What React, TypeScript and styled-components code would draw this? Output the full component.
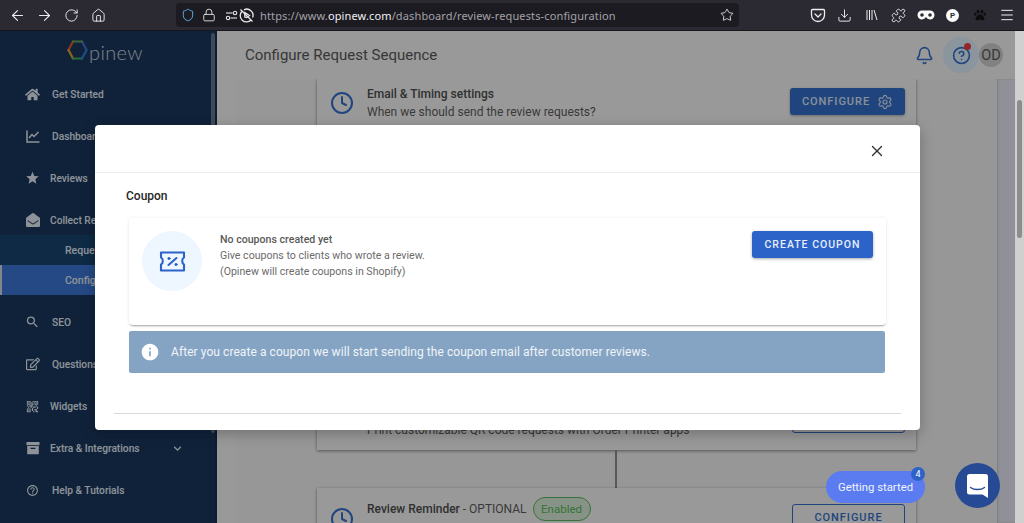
import React from "react";
import styled, { createGlobalStyle } from "styled-components";
import { ArrowLeft, ArrowRight, RotateCw, House, Shield, Lock, Star, Download, Puzzle, Menu, Bell, CircleHelp, Settings, Clock, X } from "lucide-react";
import { FaHome, FaRegEdit, FaPaw, FaEnvelopeOpen } from "react-icons/fa";
import { MdStar, MdSearch, MdOutlineQrCode2, MdHelpOutline, MdExpandMore, MdInfo } from "react-icons/md";

const Global = createGlobalStyle`
  html, body { margin: 0; padding: 0; height: 100%; overflow: hidden; }
  body { font-family: Roboto, "Liberation Sans", sans-serif; }
  * { box-sizing: border-box; }
`;

const Win = styled.div`
  width: 1024px; height: 523px; display: flex; flex-direction: column; overflow: hidden;
`;

const Toolbar = styled.div`
  height: 31px; flex: none; background: #2b2a33; display: flex; align-items: center; padding: 0 4px; color: #eeeef0;
  border-bottom: 1px solid #17161c;
`;
const ToolBtn = styled.div<{ $dark?: boolean }>`
  width: 27px; height: 27px; flex: none; display: flex; align-items: center; justify-content: center;
  color: ${(p) => (p.$dark ? "#0c0c0e" : "#eeeef0")};
`;
const UrlBar = styled.div`
  width: 563px; height: 24px; margin-left: 64px; background: #1c1b22; border-radius: 4px; flex: none;
  display: flex; align-items: center; padding-left: 5px; color: #e8e8ea;
`;
const UrlIcon = styled.span<{ $w: number }>`
  width: ${(p) => p.$w}px; flex: none; display: flex; align-items: center; justify-content: center;
`;
const UrlText = styled.div`
  font-family: "Noto Sans", sans-serif; font-size: 11px; letter-spacing: 0.13px; color: #a3a2a8; margin-left: 6px; flex: 1; white-space: nowrap;
  b { font-weight: 400; color: #f0f0f2; }
`;
const RightTools = styled.div`
  margin-left: auto; display: flex;
`;
const Pebble = styled.div`
  width: 13px; height: 13px; border-radius: 50%; background: #fbfbfb; color: #2b2a33; font-size: 8px; font-weight: 700;
  display: flex; align-items: center; justify-content: center;
`;

const Viewport = styled.div`
  flex: 1; display: flex; min-height: 0;
`;
const Page = styled.div`
  position: relative; flex: 1; display: flex; min-width: 0; overflow: hidden;
`;
const PageScroll = styled.div`
  width: 9px; flex: none; background: #d0d0d0; padding: 69px 2px 0 2px;
`;
const PageThumb = styled.div`
  height: 138px; background: #8c8c8c; border-radius: 3px;
`;

const Sidebar = styled.aside`
  width: 217px; flex: none; background: #1a385e; display: flex; border-right: 2px solid #14304f;
`;
const SideInner = styled.div`
  flex: 1; min-width: 0; overflow: hidden;
`;
const SideScroll = styled.div`
  width: 4px; flex: none; margin: 2px 0 90px 0; background: #66788e; border-radius: 2px;
`;
const Logo = styled.div`
  height: 42px; display: flex; align-items: flex-start; padding: 9px 0 0 67px; color: #cdd4dc;
  font-family: Lato, sans-serif; font-weight: 300; font-size: 20px; line-height: 22px; letter-spacing: 0.35px;
  span { margin-left: 1px; margin-top: 1px; }
`;
const Nav = styled.nav`
  display: flex; flex-direction: column;
`;
const NavRow = styled.div<{ $gap: number }>`
  height: 42px; display: flex; align-items: center; padding-left: 25px; color: #e6eef8;
  font-size: 10.2px; font-weight: 500; white-space: nowrap; gap: ${(p) => p.$gap}px;
`;
const NavIcon = styled.span`
  width: 15px; flex: none; display: flex; align-items: center; justify-content: center;
`;
const Chev = styled.span`
  margin-left: 20px; display: flex;
`;
const SubGroup = styled.div`
  margin: -6px 0 6px;
`;
const SubRow = styled.div<{ $active?: boolean }>`
  height: 30px; display: flex; align-items: center; color: #e6eef8; font-size: 10.5px; font-weight: 500;
  padding-left: ${(p) => (p.$active ? 63 : 65)}px;
  background: ${(p) => (p.$active ? "#3d77d6" : "#174470")};
  border-left: ${(p) => (p.$active ? "2px solid #d5d9e0" : "0")};
`;

const Main = styled.main`
  flex: 1; min-width: 0; display: flex; flex-direction: column; background: #f7f7f7;
`;
const Header = styled.header`
  height: 48px; flex: none; display: flex; align-items: center; padding: 0 12px 0 28px;
`;
const Title = styled.h1`
  margin: 0; font-size: 15px; font-weight: 400; color: #5a5a5a; flex: 1;
`;
const BellBox = styled.div`
  width: 20px; margin-right: 8px; color: #3570cc; display: flex;
`;
const HelpBox = styled.div`
  position: relative; width: 36px; height: 36px; border-radius: 50%; background: #dff0ff; color: #3570cc;
  display: flex; align-items: center; justify-content: center;
`;
const RedDot = styled.span`
  position: absolute; top: 6px; right: 8px; width: 7px; height: 7px; border-radius: 50%; background: #ee4040;
`;
const Avatar = styled.div`
  width: 24px; height: 24px; border-radius: 50%; background: #d0d0d0; color: #5a5a5a; font-size: 14.5px;
  display: flex; align-items: center; justify-content: center;
`;
const Content = styled.div`
  flex: 1; min-height: 0; padding-left: 19px; display: flex;
`;
const Panel = styled.div`
  width: 761px; flex: none; background: #f4f4f5; padding-left: 81px; overflow: hidden; display: flex; flex-direction: column;
`;
const Gutter = styled.div`
  flex: 1; background: #e8ebf5; box-shadow: inset 1px 0 2px rgba(0,0,0,.15);
`;
const StepCard = styled.section<{ $h: number; $end?: boolean }>`
  width: 599px; height: ${(p) => p.$h}px; flex: none; background: #f7f7f7; box-shadow: 0 1px 3px rgba(0,0,0,.45);
  display: flex; padding: 0 11px 0 13px; align-items: ${(p) => (p.$end ? "flex-end" : "flex-start")};
`;
const ClockWrap = styled.div<{ $mt?: number; $mb?: number }>`
  color: #3570cc; width: 24px; flex: none; display: flex;
  margin-top: ${(p) => p.$mt ?? 0}px; margin-bottom: ${(p) => p.$mb ?? 0}px;
`;
const StepText = styled.div<{ $mt?: number; $mb?: number }>`
  flex: 1; margin: ${(p) => p.$mt ?? 0}px 0 ${(p) => p.$mb ?? 0}px 13px; font-size: 12px; line-height: 18px; color: #5e5e5e;
`;
const StepTitle = styled.div`
  display: flex; align-items: center; font-weight: 400; color: #5e5e5e;
  b { font-weight: 500; color: #4e4e4e; }
`;
const Chip = styled.span`
  margin-left: 6px; height: 24px; width: 58px; border: 1px solid #5cb85c; border-radius: 12px; background: #d8eed8;
  color: #5cb85c; font-size: 11.5px; display: flex; align-items: center; justify-content: center;
`;
const CfgBtn = styled.div<{ $outline?: boolean; $mt?: number; $mb?: number; $w: number }>`
  width: ${(p) => p.$w}px; height: 27px; flex: none; border-radius: 3px;
  margin-top: ${(p) => p.$mt ?? 0}px; margin-bottom: ${(p) => p.$mb ?? 0}px;
  display: flex; align-items: center; justify-content: center; gap: 7px; font-size: 11px; font-weight: 500; letter-spacing: 0.95px;
  background: ${(p) => (p.$outline ? "transparent" : "#3570cc")};
  color: ${(p) => (p.$outline ? "#3570cc" : "#dfe8f5")};
  border: ${(p) => (p.$outline ? "1px solid #3570cc" : "0")};
  box-shadow: ${(p) => (p.$outline ? "none" : "0 1px 3px rgba(0,0,0,.3)")};
`;
const Connector = styled.div`
  width: 2px; height: 38px; flex: none; margin-left: 298px; background: #8f8f8f;
`;

const Scrim = styled.div`
  position: absolute; inset: 0; background: rgba(0,0,0,.38); padding: 94px 0 0 95px;
`;
const Modal = styled.div`
  width: 825px; height: 305px; background: #fff; border-radius: 4px; box-shadow: 0 4px 14px rgba(0,0,0,.25); overflow: hidden;
`;
const ModalHead = styled.div`
  height: 48px; border-bottom: 1px solid #ececec; display: flex; align-items: center; justify-content: flex-end; padding: 4px 34px 0 0; color: #2f2f2f;
`;
const CouponLabel = styled.div`
  margin: 15px 0 0 31px; font-size: 12px; line-height: 16px; font-weight: 500; color: #262626;
`;
const CouponCard = styled.div`
  margin: 14px 0 0 34px; width: 757px; height: 107px; padding: 13px; border-radius: 4px; background: #fff;
  box-shadow: 0 2px 2px -1px rgba(0,0,0,.35), 0 0 4px rgba(0,0,0,.07); display: flex; align-items: flex-start;
`;
const IconDisc = styled.div`
  width: 60px; height: 60px; flex: none; border-radius: 50%; background: #eef6ff; display: flex; align-items: center; justify-content: center;
`;
const CouponText = styled.div`
  flex: 1; margin: 1px 0 0 18px; font-size: 10.6px; line-height: 16px; color: #6b6b6b;
  strong { display: block; font-weight: 500; color: #5a5a5a; }
`;
const CreateBtn = styled.div`
  width: 121px; height: 27px; flex: none; border-radius: 3px; background: #2c63c9; color: #e6eefa; font-size: 10.5px; font-weight: 500;
  letter-spacing: 1px; display: flex; align-items: center; justify-content: center; box-shadow: 0 1px 3px rgba(0,0,0,.35);
`;
const InfoBar = styled.div`
  margin: 6px 0 0 34px; width: 756px; height: 42px; border-radius: 2px; background: #85a4c4; color: #f0f4f8;
  display: flex; align-items: center; gap: 11px; padding-left: 11px; font-size: 12px; letter-spacing: 0.07px;
`;
const FootLine = styled.div`
  margin: 40px 0 0 19px; width: 787px; height: 1px; background: #dadada;
`;

const Launcher = styled.div`
  position: absolute; left: 826px; top: 440px; width: 99px; height: 32px; border-radius: 16px; background: #5a7cf0; color: #f0f3ff;
  font-size: 11.3px; display: flex; align-items: center; justify-content: center;
`;
const LauncherBadge = styled.span`
  position: absolute; right: 0; top: -4px; width: 14px; height: 14px; border-radius: 50%; background: #2f62c8; color: #fff; font-size: 9px;
  display: flex; align-items: center; justify-content: center;
`;
const ChatBubble = styled.div`
  position: absolute; left: 955px; top: 432px; width: 45px; height: 45px; border-radius: 50%; background: #274a94;
  display: flex; align-items: center; justify-content: center;
`;

const LogoHex = () => (
  <svg width="21" height="20" viewBox="0 0 21 20" fill="none" strokeWidth="2.2" strokeLinecap="round">
    <path d="M6 1.5 L1.5 10" stroke="#e2562f" />
    <path d="M1.5 10 L6 18.5" stroke="#e8a030" />
    <path d="M6 18.5 H15" stroke="#3fae4f" />
    <path d="M15 18.5 L19.5 10" stroke="#2f7fd8" />
    <path d="M19.5 10 L15 1.5" stroke="#3a6fd0" />
    <path d="M15 1.5 H6" stroke="#6aa25a" />
  </svg>
);

const TicketIcon = () => (
  <svg width="27" height="21" viewBox="0 0 27 21" fill="none" stroke="#2c63c9" strokeWidth="2.1" strokeLinejoin="round" strokeLinecap="round">
    <path d="M2 1.5 H25 V6.6 C22.6 7.6 22.6 12.4 25 13.4 V19.5 H2 V13.4 C4.4 12.4 4.4 7.6 2 6.6 Z" />
    <path d="M9.5 14 L17.5 7" />
    <circle cx="10" cy="7.5" r="1.1" fill="#2c63c9" strokeWidth="1" />
    <circle cx="17" cy="13.5" r="1.1" fill="#2c63c9" strokeWidth="1" />
  </svg>
);

const ChartIcon = () => (
  <svg width="14" height="13" viewBox="0 0 14 13" fill="none" stroke="currentColor" strokeWidth="1.5">
    <path d="M1 0.5 V12 H13.5" />
    <path d="M3 8 L6 4.5 L8 6.5 L12.5 2" />
  </svg>
);

const ArchiveIcon = () => (
  <svg width="14" height="14" viewBox="0 0 14 14" fill="currentColor">
    <rect x="0.5" y="1" width="13" height="3.2" />
    <path fillRule="evenodd" d="M1.2 5 H12.8 V13.2 H1.2 Z M4.6 6.8 V8 H9.4 V6.8 Z" />
  </svg>
);

const Sliders = () => (
  <svg width="13" height="11" viewBox="0 0 13 11" fill="none" stroke="#e8e8ea" strokeWidth="1.1">
    <path d="M1 3 H7.5" /><circle cx="10" cy="3" r="1.7" />
    <path d="M5.5 8 H12" /><circle cx="3" cy="8" r="1.7" />
  </svg>
);

const AutoplayBlock = () => (
  <svg width="15" height="15" viewBox="0 0 15 15" fill="none" stroke="#e8e8ea" strokeWidth="1.3">
    <path d="M3 3.2 A6.2 6.2 0 1 0 12.2 12" />
    <path d="M5 1.8 A6.2 6.2 0 0 1 13.6 9.5" />
    <path d="M5.8 4.6 L10.5 7.5 L7.5 9.6 L5.8 9 Z" />
    <path d="M1.5 1.5 L13.5 13.5" />
  </svg>
);

const Pocket = () => (
  <svg width="16" height="15" viewBox="0 0 16 15" fill="none" stroke="currentColor" strokeWidth="1.3" strokeLinecap="round" strokeLinejoin="round">
    <path d="M2.5 1.5 H13.5 A1 1 0 0 1 14.5 2.5 V7 A6.5 6.5 0 0 1 1.5 7 V2.5 A1 1 0 0 1 2.5 1.5 Z" />
    <path d="M5 6 L8 9 L11 6" />
  </svg>
);

const Library = () => (
  <svg width="12" height="12" viewBox="0 0 12 12" fill="none" stroke="currentColor" strokeWidth="1">
    <path d="M1 1 V11 M3.5 1 V11 M6 1 V11 M8 1 L11 11" />
  </svg>
);

const Mask = () => (
  <svg width="18" height="10" viewBox="0 0 18 10" fill="#fbfbfb">
    <path fillRule="evenodd" d="M5 0.5 H13 A4.5 4.5 0 0 1 13 9.5 A4.5 4.5 0 0 1 9 7 A4.5 4.5 0 0 1 5 9.5 A4.5 4.5 0 0 1 5 0.5 Z M5 3.2 A1.8 1.8 0 1 0 5 6.8 A1.8 1.8 0 1 0 5 3.2 Z M13 3.2 A1.8 1.8 0 1 0 13 6.8 A1.8 1.8 0 1 0 13 3.2 Z" />
  </svg>
);

const ChatGlyph = () => (
  <svg width="21" height="24" viewBox="0 0 21 24">
    <path d="M2.5 0 H18.5 A2.5 2.5 0 0 1 21 2.5 V24 L15.5 20.5 H2.5 A2.5 2.5 0 0 1 0 18 V2.5 A2.5 2.5 0 0 1 2.5 0 Z" fill="#fff" />
    <path d="M3.5 13.5 C7 16.2 14 16.2 17.5 13.5" fill="none" stroke="#274a94" strokeWidth="1.4" strokeLinecap="round" />
  </svg>
);

const navTop = [
  { icon: <FaHome size={17} />, label: "Get Started", gap: 12 },
  { icon: <ChartIcon />, label: "Dashboard", gap: 12 },
  { icon: <MdStar size={18} />, label: "Reviews", gap: 10 },
  { icon: <FaEnvelopeOpen size={14} />, label: "Collect Reviews", gap: 10 },
];
const navBottom = [
  { icon: <MdSearch size={18} />, label: "SEO", gap: 12 },
  { icon: <FaRegEdit size={14} />, label: "Questions", gap: 12 },
  { icon: <MdOutlineQrCode2 size={15} />, label: "Widgets", gap: 10 },
];

export default function App() {
  return (
    <Win>
      <Global />
      <Toolbar>
        <ToolBtn><ArrowLeft size={17} strokeWidth={1.5} /></ToolBtn>
        <ToolBtn><ArrowRight size={17} strokeWidth={1.5} /></ToolBtn>
        <ToolBtn><RotateCw size={15} strokeWidth={1.5} /></ToolBtn>
        <ToolBtn><House size={15} strokeWidth={1.5} /></ToolBtn>
        <UrlBar>
          <UrlIcon $w={14}><Shield size={14} strokeWidth={1.6} color="#5db3ea" /></UrlIcon>
          <UrlIcon $w={28}><Lock size={14} strokeWidth={1.5} /></UrlIcon>
          <UrlIcon $w={16}><Sliders /></UrlIcon>
          <UrlIcon $w={15}><AutoplayBlock /></UrlIcon>
          <UrlText>https://www.<b>opinew.com</b>/dashboard/review-requests-configuration</UrlText>
          <UrlIcon $w={24}><Star size={14} strokeWidth={1.5} /></UrlIcon>
        </UrlBar>
        <RightTools>
          <ToolBtn><Pocket /></ToolBtn>
          <ToolBtn><Download size={15} strokeWidth={1.5} /></ToolBtn>
          <ToolBtn><Library /></ToolBtn>
          <ToolBtn><Puzzle size={15} strokeWidth={1.5} /></ToolBtn>
          <ToolBtn><Mask /></ToolBtn>
          <ToolBtn><Pebble>P</Pebble></ToolBtn>
          <ToolBtn $dark><FaPaw size={12} /></ToolBtn>
          <ToolBtn><Menu size={16} strokeWidth={1.5} /></ToolBtn>
        </RightTools>
      </Toolbar>
      <Viewport>
        <Page>
          <Sidebar>
            <SideInner>
              <Logo><LogoHex /><span>pinew</span></Logo>
              <Nav>
                {navTop.map((n) => (
                  <NavRow key={n.label} $gap={n.gap}><NavIcon>{n.icon}</NavIcon>{n.label}</NavRow>
                ))}
                <SubGroup>
                  <SubRow>Requests</SubRow>
                  <SubRow $active>Configure</SubRow>
                </SubGroup>
                {navBottom.map((n) => (
                  <NavRow key={n.label} $gap={n.gap}><NavIcon>{n.icon}</NavIcon>{n.label}</NavRow>
                ))}
                <NavRow $gap={10}>
                  <NavIcon><ArchiveIcon /></NavIcon>Extra &amp; Integrations
                  <Chev><MdExpandMore size={15} /></Chev>
                </NavRow>
                <NavRow $gap={12}><NavIcon><MdHelpOutline size={13} /></NavIcon>Help &amp; Tutorials</NavRow>
              </Nav>
            </SideInner>
            <SideScroll />
          </Sidebar>
          <Main>
            <Header>
              <Title>Configure Request Sequence</Title>
              <BellBox><Bell size={19} strokeWidth={2} /></BellBox>
              <HelpBox><CircleHelp size={19} strokeWidth={2} /><RedDot /></HelpBox>
              <Avatar>OD</Avatar>
            </Header>
            <Content>
              <Panel>
                <StepCard $h={100}>
                  <ClockWrap $mt={12}><Clock size={24} strokeWidth={2} /></ClockWrap>
                  <StepText $mt={6}>
                    <StepTitle><b>Email &amp; Timing settings</b></StepTitle>
                    When we should send the review requests?
                  </StepText>
                  <CfgBtn $mt={9} $w={115}>CONFIGURE <Settings size={16} strokeWidth={1.7} /></CfgBtn>
                </StepCard>
                <Connector />
                <StepCard $h={233} $end>
                  <ClockWrap $mb={19}><Clock size={24} strokeWidth={2} /></ClockWrap>
                  <StepText $mb={11}>
                    Print customizable QR code requests with Order Printer apps
                  </StepText>
                  <CfgBtn $outline $mb={17} $w={113}>CONFIGURE</CfgBtn>
                </StepCard>
                <Connector />
                <StepCard $h={100}>
                  <ClockWrap $mt={19}><Clock size={24} strokeWidth={2} /></ClockWrap>
                  <StepText $mt={9}>
                    <StepTitle><b>Review Reminder</b>&nbsp;- OPTIONAL<Chip>Enabled</Chip></StepTitle>
                  </StepText>
                  <CfgBtn $outline $mt={16} $w={113}>CONFIGURE</CfgBtn>
                </StepCard>
              </Panel>
              <Gutter />
            </Content>
          </Main>
          <Scrim>
            <Modal>
              <ModalHead><X size={18} strokeWidth={1.8} /></ModalHead>
              <CouponLabel>Coupon</CouponLabel>
              <CouponCard>
                <IconDisc><TicketIcon /></IconDisc>
                <CouponText>
                  <strong>No coupons created yet</strong>
                  Give coupons to clients who wrote a review.<br />
                  (Opinew will create coupons in Shopify)
                </CouponText>
                <CreateBtn>CREATE COUPON</CreateBtn>
              </CouponCard>
              <InfoBar>
                <MdInfo size={20} color="#fff" />
                After you create a coupon we will start sending the coupon email after customer reviews.
              </InfoBar>
              <FootLine />
            </Modal>
          </Scrim>
          <Launcher>Getting started<LauncherBadge>4</LauncherBadge></Launcher>
          <ChatBubble><ChatGlyph /></ChatBubble>
        </Page>
        <PageScroll><PageThumb /></PageScroll>
      </Viewport>
    </Win>
  );
}
